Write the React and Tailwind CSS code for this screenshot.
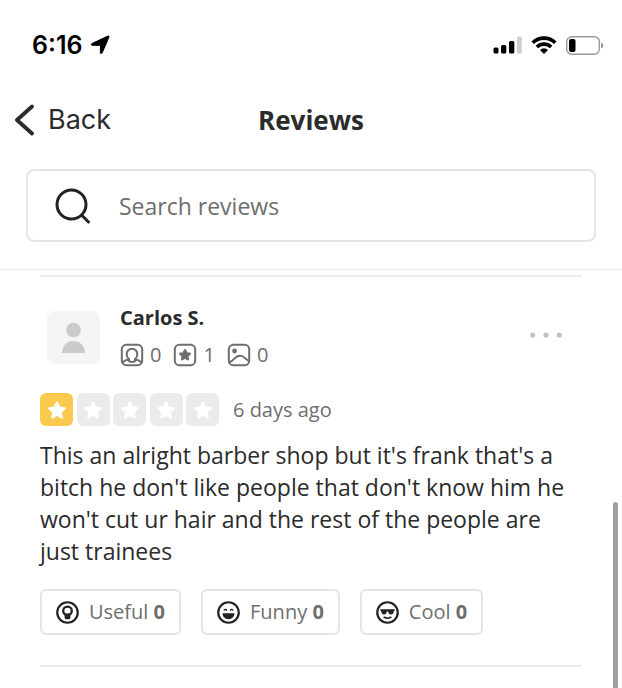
import React from 'react';

const STAR = 'M12 2.6c.5 0 .9.3 1.1.8l2.2 4.9 5.3.6c1.1.1 1.5 1.4.7 2.1l-4 3.6 1.1 5.3c.2 1-.9 1.8-1.8 1.3L12 18.5l-4.600 2.700c-.9.5-2-.3-1.800-1.300l1.100-5.300-4-3.600c-.8-.7-.4-2 .7-2.100l5.300-.6 2.200-4.900c.2-.5.600-.8 1.100-.8z';

// Status bar icons
function LocationIcon() {
  return (
    <svg className="w-5 h-5" viewBox="0 0 20 20" fill="#000" stroke="#000" strokeWidth="1" strokeLinejoin="round" aria-hidden="true">
      <path d="M18 1c.7-.3 1.300.3 1 1l-6.900 16c-.4.900-1.700.700-1.700-.3V10.300H2.200c-1 0-1.200-1.300-.3-1.700z" />
    </svg>
  );
}

function SignalIcon() {
  return (
    <svg className="w-[29px] h-[18px]" viewBox="0 0 29 18" aria-hidden="true">
      <rect x="0.500" y="11.500" width="5" height="6" rx="1.500" />
      <rect x="8" y="9" width="5.300" height="8.500" rx="1.500" />
      <rect x="16" y="5" width="5.300" height="12.500" rx="1.500" />
      <rect x="24" y="0.500" width="4.800" height="17" rx="1.500" fill="#cfcfcf" />
    </svg>
  );
}

function WifiIcon() {
  return (
    <svg className="w-[26px] h-[18px]" viewBox="0 0 26 18" fill="none" stroke="#000" strokeWidth="3.600" aria-hidden="true">
      <path d="M1.700 6.800a16 16 0 0 1 22.600 0" />
      <path d="M5.900 11.100a10 10 0 0 1 14.200 0" />
      <path d="M13 18l-4-4a5.700 5.700 0 0 1 8 0z" fill="#000" stroke="none" />
    </svg>
  );
}

function BatteryIcon() {
  return (
    <svg className="w-[38px] h-[19px]" viewBox="0 0 38 19" aria-hidden="true">
      <rect x="0.700" y="0.700" width="32.600" height="17.600" rx="5" fill="none" stroke="#999" strokeWidth="1.400" />
      <rect x="3" y="3" width="6.500" height="13" rx="2" />
      <path d="M35.200 6.500v6c2.600-.8 2.600-5.200 0-6z" fill="#888" />
    </svg>
  );
}

// User stat icons
function StatIcon({ children }) {
  return (
    <svg className="w-6 h-6" viewBox="0 0 24 24" fill="none" stroke="#6e6e6e" strokeWidth="2" strokeLinecap="round" aria-hidden="true">
      <rect x="1.800" y="1.800" width="20.400" height="20.400" rx="4.500" />
      {children}
    </svg>
  );
}

function FriendsIcon() {
  return (
    <StatIcon>
      <path d="M9 16.200c-1.500-1.200-2.300-3-2.300-5.200a5.300 5.300 0 0 1 10.600 0c0 2.200-.8 4-2.300 5.200" />
      <path d="M3 19.200c1.200-1.600 3.300-2.600 6-3v2M21 19.200c-1.200-1.600-3.300-2.600-6-3v2" />
      <path d="M9 18.200c1.800 1 4.200 1 6 0" />
    </StatIcon>
  );
}

function ReviewsIcon() {
  return (
    <StatIcon>
      <path transform="translate(5.400 5.200) scale(.55)" fill="#6e6e6e" d={STAR} />
    </StatIcon>
  );
}

function PhotosIcon() {
  return (
    <StatIcon>
      <circle cx="7.600" cy="8" r="2.400" fill="#6e6e6e" stroke="none" />
      <path d="M2.500 19.200c2-.6 3.300-1.800 4.800-3.500 2.300-2.600 4.400-3.600 7-2.800 2.600.8 4.600 3.300 7 4.600" />
    </StatIcon>
  );
}

// Reaction icons
function ReactionIcon({ children }) {
  return (
    <svg className="w-[23px] h-[23px]" viewBox="0 0 24 24" fill="none" stroke="#222" strokeLinecap="round" aria-hidden="true">
      <circle cx="12" cy="12" r="10.700" strokeWidth="2.300" />
      {children}
    </svg>
  );
}

function UsefulIcon() {
  return (
    <ReactionIcon>
      <circle cx="12" cy="10.300" r="4.500" strokeWidth="2.400" />
      <path d="M9 13h6v4.400a1.600 1.600 0 0 1-1.600 1.600h-2.800A1.600 1.600 0 0 1 9 17.400z" fill="#222" stroke="none" />
    </ReactionIcon>
  );
}

function FunnyIcon() {
  return (
    <ReactionIcon>
      <path d="M5.800 12.800h12.400c0 3.700-2.700 6.200-6.200 6.200s-6.200-2.500-6.200-6.200z" fill="#222" stroke="none" />
      <path d="M7.500 9.500c.6-1 2-1 2.600 0M13.900 9.500c.6-1 2-1 2.600 0" strokeWidth="1.400" />
    </ReactionIcon>
  );
}

function CoolIcon() {
  return (
    <ReactionIcon>
      <path d="M4.500 8.700h15v1.400l-.9.400c-.2 2.500-1.200 3.700-3 3.700-1.700 0-2.600-1.200-2.900-3.200h-1.400c-.3 2-1.200 3.200-2.900 3.200-1.800 0-2.800-1.200-3-3.700l-.9-.4z" fill="#222" stroke="none" />
      <path d="M8.500 17c2.200 1.200 4.800 1.200 7 0" strokeWidth="1.700" />
    </ReactionIcon>
  );
}

const stats = [
  { label: 'Friends', Icon: FriendsIcon, count: 0 },
  { label: 'Reviews', Icon: ReviewsIcon, count: 1 },
  { label: 'Photos', Icon: PhotosIcon, count: 0 },
];

const reactions = [
  { label: 'Useful', Icon: UsefulIcon, count: 0 },
  { label: 'Funny', Icon: FunnyIcon, count: 0 },
  { label: 'Cool', Icon: CoolIcon, count: 0 },
];

function StatusBar() {
  return (
    <div className="flex items-center justify-between h-[90px] pl-8 pr-[18px] text-black font-['Inter',sans-serif]">
      <div className="flex items-center gap-[7px]">
        <span className="text-[25px] leading-8 font-semibold">6:16</span>
        <LocationIcon />
      </div>
      <div className="flex items-center gap-[9px]">
        <SignalIcon />
        <WifiIcon />
        <BatteryIcon />
      </div>
    </div>
  );
}

function Header() {
  return (
    <header className="border-b border-[#ebebeb] pb-[27px]">
      <div className="grid grid-cols-3 items-center h-[60px] px-[14px]">
        <button type="button" className="flex items-center gap-[14px] justify-self-start font-['Inter',sans-serif] text-[27px] leading-8">
          <svg className="w-5 h-8" viewBox="0 0 20 32" fill="none" stroke="#2b2b2b" strokeWidth="3.800" strokeLinecap="round" strokeLinejoin="round" aria-hidden="true">
            <path d="M18 2.500L3 16l15 13.500" />
          </svg>
          Back
        </button>
        <h1 className="text-center text-[26px] leading-8 font-bold">Reviews</h1>
      </div>
      <label className="flex items-center gap-7 h-[73px] mx-[26px] mt-[19px] px-[27px] border-2 border-[#e5e5e5] rounded-lg">
        <svg className="w-9 h-9 shrink-0" viewBox="0 0 36 36" fill="none" stroke="#222" strokeWidth="3" strokeLinecap="round" aria-hidden="true">
          <circle cx="16.500" cy="16.500" r="14.500" />
          <path d="M27 27.500l6.500 6.500" />
        </svg>
        <input
          type="text"
          aria-label="Search reviews"
          placeholder="Search reviews"
          className="grow min-w-0 text-[23px] leading-8 outline-none placeholder:text-[#6e6e6e]"
        />
      </label>
    </header>
  );
}

function Rating({ value }) {
  return (
    <div className="flex justify-between w-[179px]" role="img" aria-label={`${value} out of 5`}>
      {[1, 2, 3, 4, 5].map((n) => (
        <span
          key={n}
          className={`flex items-center justify-center w-[33px] h-[33px] rounded-md ${n <= value ? 'bg-[#fbc94d]' : 'bg-[#ebebeb]'}`}
        >
          <svg className="w-[22px] h-[22px]" viewBox="0 0 24 24" fill="#fff">
            <path d={STAR} />
          </svg>
        </span>
      ))}
    </div>
  );
}

function Review() {
  return (
    <article className="border-y-2 border-[#ebebeb] pt-[27px] pb-[30px]">
      <div className="flex items-start">
        <div className="w-[53px] h-[53px] ml-[7px] mt-[7px] rounded-lg bg-[#f5f5f5]">
          <svg viewBox="0 0 53 53" fill="#cbcbcb" aria-hidden="true">
            <circle cx="26.500" cy="19" r="7.300" />
            <path d="M15 42c0-7 4.500-12 11.500-12S38 35 38 42z" />
          </svg>
        </div>
        <div className="ml-5">
          <h2 className="text-xl leading-7 font-bold">Carlos S.</h2>
          <ul className="flex gap-3 mt-[9px] text-xl leading-7 text-[#6e6e6e]">
            {stats.map(({ label, Icon, count }) => (
              <li key={label} aria-label={label} className="flex items-center gap-[6px]">
                <Icon />
                {count}
              </li>
            ))}
          </ul>
        </div>
        <button type="button" aria-label="More options" className="ml-auto mr-5 mt-7">
          <svg className="w-8 h-[6px]" viewBox="0 0 32 6" fill="#c2c2c2">
            <circle cx="2.700" cy="3" r="2.600" />
            <circle cx="16" cy="3" r="2.600" />
            <circle cx="29.300" cy="3" r="2.600" />
          </svg>
        </button>
      </div>

      <div className="flex items-center gap-[14px] mt-6">
        <Rating value={1} />
        <span className="text-xl leading-7 text-[#6e6e6e]">6 days ago</span>
      </div>

      <p className="mt-[13px] text-[23px] leading-8">
        This an alright barber shop but it's frank that's a bitch he don't like people that don't know him he won't cut ur hair and the rest of the people are just trainees
      </p>

      <div className="flex gap-5 mt-[22px]">
        {reactions.map(({ label, Icon, count }) => (
          <button
            key={label}
            type="button"
            className="flex items-center gap-[10px] h-[46px] px-[14px] border-2 border-[#e5e5e5] rounded-md text-xl text-[#6e6e6e]"
          >
            <Icon />
            <span>{label} <b className="font-bold">{count}</b></span>
          </button>
        ))}
      </div>
    </article>
  );
}

export default function App() {
  return (
    <div className="relative min-h-screen bg-white text-[#2b2b2b] font-['Open_Sans',sans-serif]">
      <StatusBar />
      <Header />
      <main className="px-10 pt-[5px]">
        <Review />
      </main>
      {/* Scroll indicator */}
      <div className="absolute right-1 top-[502px] bottom-0 w-[5px] rounded-t-full bg-[#a0a0a0]" />
    </div>
  );
}
